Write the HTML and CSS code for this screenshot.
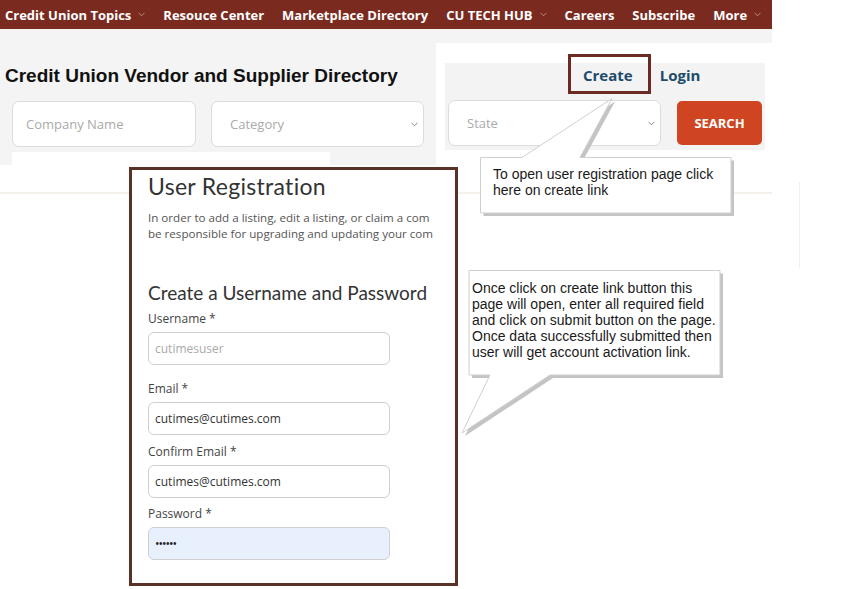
FILE: index.html
```html
<!DOCTYPE html>
<html>
<head>
    <title>Credit Union Vendor and Supplier Directory</title>
    <link rel="stylesheet" href="styles.css">
</head>
<body>
    <div id="topnav">
        <a class="nav-item">Credit Union Topics <svg class="caret" width="7" height="5" viewBox="0 0 7 5"><path d="M0.5 0.8 L3.5 3.8 L6.5 0.8" /></svg></a>
        <a class="nav-item">Resouce Center</a>
        <a class="nav-item">Marketplace Directory</a>
        <a class="nav-item">CU TECH HUB <svg class="caret" width="7" height="5" viewBox="0 0 7 5"><path d="M0.5 0.8 L3.5 3.8 L6.5 0.8" /></svg></a>
        <a class="nav-item">Careers</a>
        <a class="nav-item">Subscribe</a>
        <a class="nav-item">More <svg class="caret" width="7" height="5" viewBox="0 0 7 5"><path d="M0.5 0.8 L3.5 3.8 L6.5 0.8" /></svg></a>
    </div>

    <div id="directory">
        <div class="search-left">
            <h1>Credit Union Vendor and Supplier Directory</h1>
            <div class="filters">
                <input class="field company" type="text" placeholder="Company Name">
                <div class="field select category">Category
                    <svg class="chevron" width="7" height="5" viewBox="0 0 7 5"><path d="M0.5 0.8 L3.5 3.8 L6.5 0.8" /></svg>
                </div>
            </div>
        </div>
        <div class="search-right">
            <div class="account-box">
                <div class="account-links">
                    <a class="create">Create<span class="highlight"></span></a>
                    <a class="login">Login</a>
                </div>
                <div class="filters">
                    <div class="field select state">State
                        <svg class="chevron" width="7" height="5" viewBox="0 0 7 5"><path d="M0.5 0.8 L3.5 3.8 L6.5 0.8" /></svg>
                    </div>
                    <button class="search-button">SEARCH</button>
                </div>
            </div>
        </div>
    </div>
    <div class="page-under"></div>

    <!-- pasted screenshot of the registration page -->
    <div class="shot-edge"></div>
    <div class="edge-line"></div>
    <div id="registration">
        <div class="reg-inner">
            <h2 class="reg-title">User Registration</h2>
            <p class="reg-intro">In order to add a listing, edit a listing, or claim a com<br>be responsible for upgrading and updating your com</p>
            <h3 class="reg-subtitle">Create a Username and Password</h3>
            <div class="reg-field first">
                <label for="username">Username *</label>
                <input id="username" type="text" placeholder="cutimesuser">
            </div>
            <div class="reg-field">
                <label for="email">Email *</label>
                <input id="email" type="text" value="cutimes@cutimes.com">
            </div>
            <div class="reg-field">
                <label for="confirm-email">Confirm Email *</label>
                <input id="confirm-email" type="text" value="cutimes@cutimes.com">
            </div>
            <div class="reg-field">
                <label for="password">Password *</label>
                <input id="password" class="filled" type="text" value="&#8226;&#8226;&#8226;&#8226;&#8226;&#8226;">
            </div>
        </div>
    </div>

    <!-- callouts -->
    <div class="callout callout-create">
        <svg class="callout-shape" width="258" height="120" viewBox="0 0 258 120">
            <path class="shadow" d="M3.5 62.5 H45 L135 3.5 L103 62.5 H254 V118 H3.5 Z" />
            <path class="bubble" d="M0.5 59.5 H42 L132 0.5 L100 59.5 H251 V115 H0.5 Z" />
        </svg>
        <div class="callout-text">To open user registration page click<br>here on create link</div>
    </div>
    <div class="callout callout-form">
        <svg class="callout-shape" width="266" height="170" viewBox="0 0 266 170">
            <path class="shadow" d="M12 3.5 H263 V108 H93 L5 166 L33 108 H12 Z" />
            <path class="bubble" d="M9 0.5 H260 V105 H90 L2 163 L30 105 H9 Z" />
        </svg>
        <div class="callout-text">Once click on create link button this<br>page will open, enter all required field<br>and click on submit button on the page.<br>Once data successfully submitted then<br>user will get account activation link.</div>
    </div>
</body>
</html>
```

FILE: styles.css
```css
body {
    margin: 0;
    width: 841px;
    height: 589px;
    overflow: hidden;
    position: relative;
    background-color: #fff;
    font-family: "Open Sans", Arial, sans-serif;
    color: #333;
}

/* Top navigation */
#topnav {
    display: flex;
    align-items: center;
    gap: 18px;
    width: 772px;
    height: 29px;
    padding-left: 5px;
    box-sizing: border-box;
    background-color: #7a2a1f;
}
.nav-item {
    display: flex;
    align-items: center;
    color: #fff;
    font-size: 13px;
    font-weight: 700;
    white-space: nowrap;
}
.caret {
    margin-left: 7px;
    fill: none;
    stroke: rgba(255, 255, 255, 0.45);
    stroke-width: 1;
}

/* Directory search */
#directory {
    display: flex;
    width: 772px;
    height: 136px;
    background-color: #f4f4f4;
}
.search-left {
    width: 436px;
}
h1 {
    margin: 36px 0 0 5px;
    font-family: "Liberation Sans", Arial, sans-serif;
    font-size: 19px;
    font-weight: 700;
    color: #111;
    line-height: 22px;
}
.filters {
    display: flex;
    gap: 15px;
}
.search-left .filters {
    margin: 14px 0 0 12px;
}
.field {
    height: 46px;
    box-sizing: border-box;
    border: 1px solid #dcdcdc;
    border-radius: 7px;
    background-color: #fff;
    font-family: "Open Sans", Arial, sans-serif;
    font-size: 13px;
    color: #aaa;
}
input.field {
    padding: 0 13px;
    outline: none;
}
input.field::placeholder {
    color: #aaa;
}
.company {
    width: 184px;
}
.select {
    display: flex;
    align-items: center;
    justify-content: space-between;
    padding: 0 5px 0 18px;
}
.category {
    width: 213px;
}
.chevron {
    fill: none;
    stroke: #888;
    stroke-width: 1;
}

.search-right {
    width: 336px;
    height: 122px;
    margin-top: 14px;
    padding: 20px 7px 0 9px;
    box-sizing: border-box;
    background-color: #fff;
}
.account-box {
    width: 320px;
    height: 87px;
    padding-top: 2px;
    box-sizing: border-box;
    background-color: #f3f3f3;
}
.account-links {
    display: flex;
    gap: 27px;
    padding-left: 138px;
    font-size: 15px;
    font-weight: 700;
    line-height: 20px;
    color: #1f4b6b;
}
.create {
    position: relative;
}
.highlight {
    position: absolute;
    left: -15px;
    top: -11px;
    width: 83px;
    height: 40px;
    box-sizing: border-box;
    border: 3px solid #6b2a22;
}
.account-box .filters {
    margin: 15px 0 0 3px;
    gap: 16px;
}
.state {
    width: 213px;
}
.search-button {
    width: 85px;
    height: 44px;
    margin-top: 1px;
    border: none;
    border-radius: 5px;
    background-color: #cf4521;
    color: #fff;
    font-family: "Open Sans", Arial, sans-serif;
    font-size: 13px;
    font-weight: 700;
}

.page-under {
    width: 772px;
    height: 27px;
    border-bottom: 2px solid #f4f1e8;
}

/* Registration screenshot */
.shot-edge {
    position: absolute;
    left: 12px;
    top: 152px;
    width: 318px;
    height: 14px;
    background-color: #fff;
}
.edge-line {
    position: absolute;
    left: 799px;
    top: 182px;
    width: 1px;
    height: 86px;
    background-color: #f0f0f0;
}
#registration {
    position: absolute;
    left: 129px;
    top: 167px;
    width: 329px;
    height: 419px;
    box-sizing: border-box;
    border: 3px solid #5a3126;
    background-color: #fff;
}
.reg-inner {
    width: 290px;
    margin-left: 16px;
    white-space: nowrap;
}
.reg-title {
    margin: 3px 0 0 0;
    font-family: Lato, "Open Sans", sans-serif;
    font-size: 23px;
    font-weight: 400;
    letter-spacing: 0.3px;
    line-height: 26px;
    color: #333;
}
.reg-intro {
    margin: 11px 0 0 0;
    font-size: 11.6px;
    line-height: 16px;
    color: #555;
}
.reg-subtitle {
    margin: 39px 0 6px 0;
    font-family: Lato, "Open Sans", sans-serif;
    font-size: 19px;
    font-weight: 400;
    line-height: 23px;
    color: #333;
}
.reg-field {
    margin-bottom: 7.5px;
}
.reg-field.first {
    margin-bottom: 15px;
}
.reg-field label {
    display: block;
    margin-bottom: 5px;
    font-size: 12px;
    line-height: 17px;
    color: #444;
}
.reg-field input {
    display: block;
    width: 242px;
    height: 33px;
    box-sizing: border-box;
    padding: 0 6px;
    border: 1px solid #cfcfcf;
    border-radius: 6px;
    background-color: #fff;
    font-family: "Open Sans", Arial, sans-serif;
    font-size: 12px;
    color: #333;
    outline: none;
}
.reg-field input::placeholder {
    color: #aaa;
}
.reg-field input.filled {
    background-color: #e8f0fe;
    color: #222;
    letter-spacing: -1px;
}

/* Callouts */
.callout {
    position: absolute;
}
.callout-shape {
    position: absolute;
    left: 0;
    top: 0;
}
.callout-shape .shadow {
    fill: #c4c4c4;
}
.callout-shape .bubble {
    fill: #fff;
    stroke: #cfcfcf;
    stroke-width: 1;
}
.callout-text {
    position: relative;
    font-family: "Liberation Sans", Arial, sans-serif;
    font-size: 14px;
    line-height: 16px;
    color: #1a1a1a;
    white-space: nowrap;
}
.callout-create {
    left: 480px;
    top: 98px;
    width: 258px;
    height: 120px;
}
.callout-create .callout-text {
    padding: 68px 0 0 13px;
}
.callout-form {
    left: 460px;
    top: 270px;
    width: 266px;
    height: 170px;
}
.callout-form .callout-text {
    padding: 10px 0 0 12px;
}
```
